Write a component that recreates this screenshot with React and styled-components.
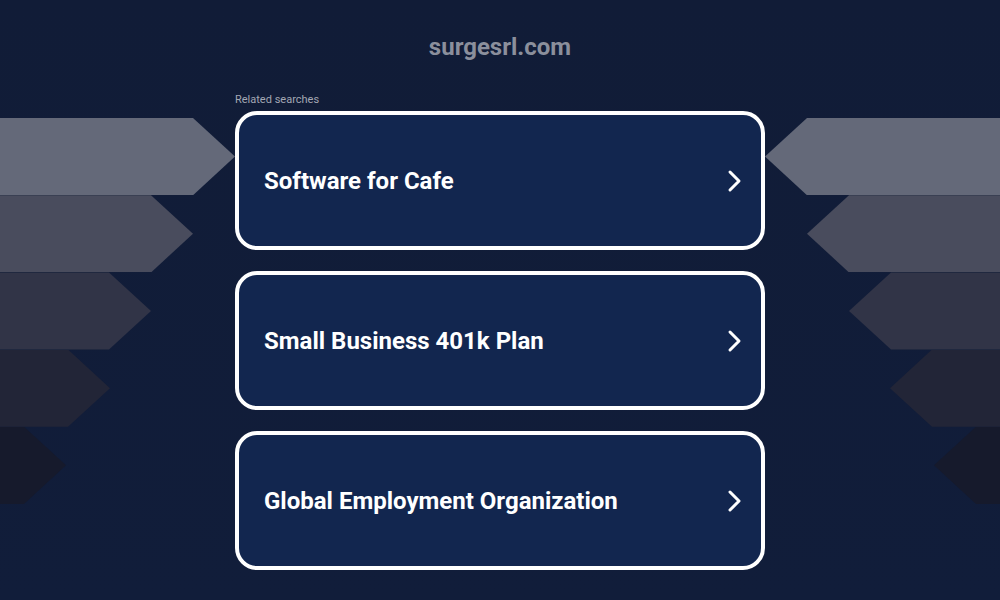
import React from 'react'
import styled, { createGlobalStyle } from 'styled-components'

const GlobalStyle = createGlobalStyle`
  html, body {
    margin: 0;
    padding: 0;
    background: #111c37;
  }
  * { box-sizing: border-box; }
`

const searches = [
  'Software for Cafe',
  'Small Business 401k Plan',
  'Global Employment Organization',
]

const bands = [
  { width: 235, color: '#646979' },
  { width: 193, color: '#494c5d' },
  { width: 151, color: '#313447' },
  { width: 110, color: '#222537' },
  { width: 66, color: '#161a2c' },
]

function Chevron() {
  return (
    <svg width="16" height="24" viewBox="0 0 16 24" fill="none">
      <polyline points="3,3 12,12 3,21" stroke="#ffffff" strokeWidth="3" strokeLinecap="round" strokeLinejoin="round" />
    </svg>
  )
}

function App() {
  return (
    <Page>
      <GlobalStyle />
      <Header>
        <Domain>surgesrl.com</Domain>
      </Header>
      <Grid>
        <Side>
          {bands.map((b, i) => (
            <Band key={i} $side="left" $width={b.width} $color={b.color} />
          ))}
        </Side>
        <Center>
          <Label>Related searches</Label>
          {searches.map((s) => (
            <Card key={s} href="#">
              <CardText>{s}</CardText>
              <Chevron />
            </Card>
          ))}
        </Center>
        <Side $right>
          {bands.map((b, i) => (
            <Band key={i} $side="right" $width={b.width} $color={b.color} />
          ))}
        </Side>
      </Grid>
    </Page>
  )
}

export default App

const Page = styled.div`
    width:100%;
    min-height:600px;
    background:linear-gradient(180deg, #111c37 0%, #111d3a 100%);
    font-family:Roboto, "Liberation Sans", Arial, sans-serif;
    overflow:hidden;
`
const Header = styled.header`
    height:93px;
    display:flex;
    align-items:center;
    justify-content:center;
`
const Domain = styled.h1`
    margin:0;
    font-size:24px;
    font-weight:700;
    color:#8b8f9c;
`
const Grid = styled.div`
    display:grid;
    grid-template-columns:235px 530px 235px;
`
const Side = styled.div`
    padding-top:25px;
    display:flex;
    flex-direction:column;
    align-items:${(p) => (p.$right ? 'flex-end' : 'flex-start')};
`
const Band = styled.div`
    height:77.2px;
    width:${(p) => p.$width}px;
    background:${(p) => p.$color};
    clip-path:${(p) =>
      p.$side === 'left'
        ? 'polygon(0 0, calc(100% - 42px) 0, 100% 50%, calc(100% - 42px) 100%, 0 100%)'
        : 'polygon(42px 0, 100% 0, 100% 100%, 42px 100%, 0 50%)'};
`
const Center = styled.main`
    display:flex;
    flex-direction:column;
`
const Label = styled.div`
    font-size:11px;
    line-height:14px;
    color:#a3a7b3;
    margin-bottom:4px;
`
const Card = styled.a`
    height:139px;
    margin-bottom:21px;
    border:4px solid #ffffff;
    border-radius:22px;
    background:#12264f;
    display:flex;
    align-items:center;
    justify-content:space-between;
    padding:0 18px 0 25px;
    text-decoration:none;
`
const CardText = styled.span`
    font-size:24px;
    font-weight:700;
    color:#ffffff;
`
